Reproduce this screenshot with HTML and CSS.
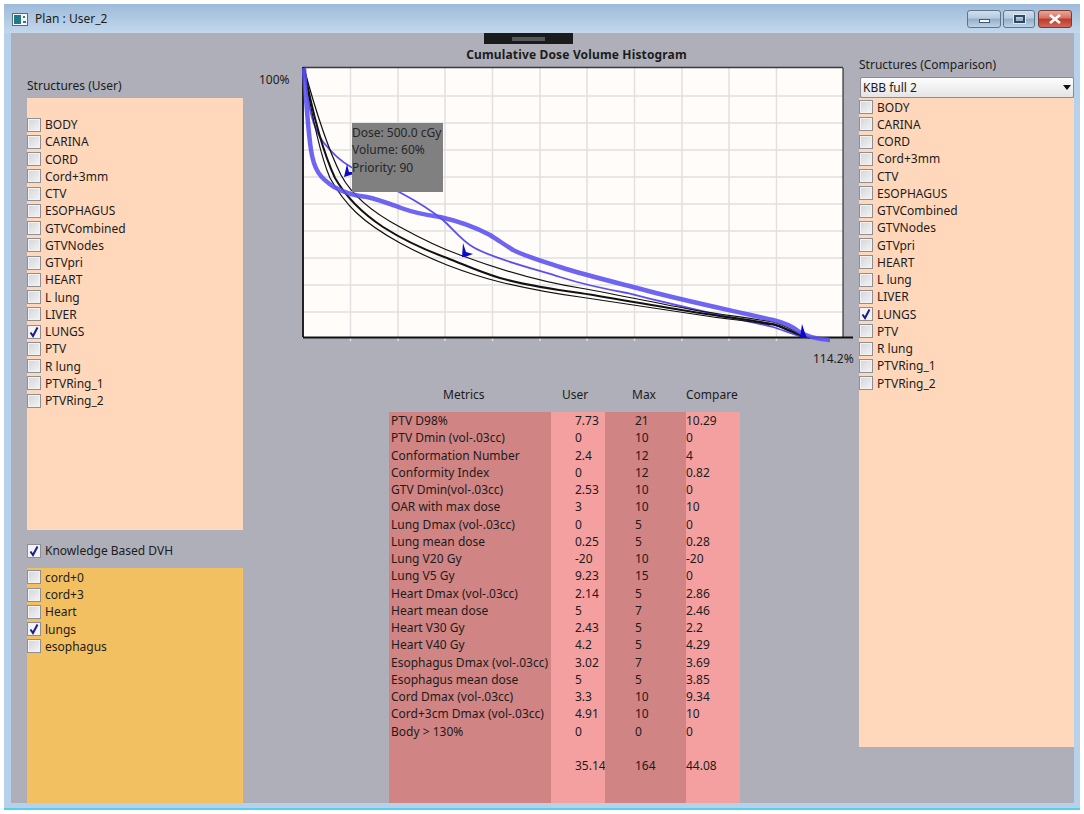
FILE: index.html
```html
<!DOCTYPE html>
<html lang="en">

<head>
    <meta charset="UTF-8">
    <title>Plan : User_2</title>
    <link rel="stylesheet" href="styles.css">
</head>

<body>
    <div class="window">
        <div class="titlebar">
            <svg class="app-icon" width="16" height="13" viewBox="0 0 16 13">
                <rect x="0.5" y="0.5" width="15" height="12" fill="#f4f6f8" stroke="#5a6a78" />
                <rect x="2" y="2" width="7" height="9" fill="#1f7a8c" />
                <rect x="11" y="3" width="2" height="2" fill="#3a8a4a" />
                <rect x="11" y="8" width="3" height="2" fill="#3a6ab0" />
            </svg>
            <span class="window-title">Plan : User_2</span>
            <div class="window-buttons">
                <div class="win-btn"><span class="min-glyph"></span></div>
                <div class="win-btn max-btn"><span class="max-glyph"></span></div>
                <div class="win-btn close-btn">
                    <svg width="14" height="10" viewBox="0 0 14 10">
                        <path d="M2 1 L12 9 M12 1 L2 9" stroke="#fff" stroke-width="2.6" />
                    </svg>
                </div>
            </div>
        </div>
        <div class="client">
            <!-- left column -->
            <div class="left-col">
                <div class="col-label">Structures (User)</div>
                <div class="panel peach user-panel">
                    <div class="check-row"><span class="box"></span>BODY</div>
                    <div class="check-row"><span class="box"></span>CARINA</div>
                    <div class="check-row"><span class="box"></span>CORD</div>
                    <div class="check-row"><span class="box"></span>Cord+3mm</div>
                    <div class="check-row"><span class="box"></span>CTV</div>
                    <div class="check-row"><span class="box"></span>ESOPHAGUS</div>
                    <div class="check-row"><span class="box"></span>GTVCombined</div>
                    <div class="check-row"><span class="box"></span>GTVNodes</div>
                    <div class="check-row"><span class="box"></span>GTVpri</div>
                    <div class="check-row"><span class="box"></span>HEART</div>
                    <div class="check-row"><span class="box"></span>L lung</div>
                    <div class="check-row"><span class="box"></span>LIVER</div>
                    <div class="check-row"><span class="box checked">
                        <svg width="12" height="12" viewBox="0 0 12 12"><path d="M2.5 6.5 L5 10 L9.5 1.5" fill="none" stroke="#1c1c8c" stroke-width="2" /></svg>
                    </span>LUNGS</div>
                    <div class="check-row"><span class="box"></span>PTV</div>
                    <div class="check-row"><span class="box"></span>R lung</div>
                    <div class="check-row"><span class="box"></span>PTVRing_1</div>
                    <div class="check-row"><span class="box"></span>PTVRing_2</div>
                </div>
                <div class="check-row kb-row"><span class="box checked">
                    <svg width="12" height="12" viewBox="0 0 12 12"><path d="M2.5 6.5 L5 10 L9.5 1.5" fill="none" stroke="#1c1c8c" stroke-width="2" /></svg>
                </span>Knowledge Based DVH</div>
                <div class="panel yellow kb-panel">
                    <div class="check-row"><span class="box"></span>cord+0</div>
                    <div class="check-row"><span class="box"></span>cord+3</div>
                    <div class="check-row"><span class="box"></span>Heart</div>
                    <div class="check-row"><span class="box checked">
                        <svg width="12" height="12" viewBox="0 0 12 12"><path d="M2.5 6.5 L5 10 L9.5 1.5" fill="none" stroke="#1c1c8c" stroke-width="2" /></svg>
                    </span>lungs</div>
                    <div class="check-row"><span class="box"></span>esophagus</div>
                </div>
            </div>

            <!-- chart and metrics -->
            <div class="center-col">
                <div class="handle"><span class="handle-grip"></span></div>
                <div class="chart-title">Cumulative Dose Volume Histogram</div>
                <div class="chart-wrap">
                    <svg class="chart" width="616" height="316" viewBox="243 60 616 316">
                        <rect x="303" y="68" width="540" height="269" fill="#fffcfa" />
                        <g stroke="#e2e0e0" stroke-width="1.5">
                            <path d="M350.5 68V341 M398 68V341 M445 68V341 M492.5 68V341 M540 68V341 M587 68V341 M634.5 68V341 M682 68V341 M729 68V341 M776.5 68V341" />
                            <path d="M303 96H843 M303 123H843 M303 150H843 M303 177H843 M303 204H843 M303 231H843 M303 258H843 M303 285H843 M303 312H843" />
                        </g>
                        <path d="M303 67.5H843" stroke="#3a3a3a" stroke-width="1.5" />
                        <path d="M303 67V337" stroke="#222" stroke-width="2" />
                        <path d="M843 68V337" stroke="#111" stroke-width="1" />

                        <!-- thin blue -->
                        <path d="M304 68 C308 105 312 128 324 143 C332 153 342 162 351 167 C370 177 388 186 401 193 C418 202 432 211 443 220 C453 229 462 241 473 247 C495 260 540 270 560 277 C585 285 605 289 627 293 C655 300 685 307 710 313 C735 319 755 322 773 327 C785 331 795 335 803 337" fill="none" stroke="#4a3cf0" stroke-width="1.8" opacity="0.9" />
                        <!-- black curves -->
                        <g fill="none" stroke="#111">
                            <path d="M304 68 C310 105 318 150 330 178 C345 205 362 222 400 243 C420 254 432 259 447 265 C465 272 480 277 500 282 C525 288 550 293 580 297 C625 304 665 310 700 315 C725 319 750 321 773 325 C785 328 795 335 810 338" stroke-width="1.2" />
                            <path d="M304 68 C311 105 322 150 335 178 C346 197 362 213 383 227 C405 241 425 250 447 258 C465 265 480 272 500 278 C525 285 550 289 580 293 C625 300 665 308 700 313 C725 317 750 320 773 324 C785 327 795 334 810 338" stroke-width="2" />
                            <path d="M304 68 C314 105 326 145 341 175 C350 192 368 210 400 227 C420 238 440 248 460 255 C495 268 535 281 580 288 C625 296 665 305 700 311 C725 315 750 318 773 322 C785 325 795 332 810 338" stroke-width="1.2" />
                        </g>
                        <path d="M303 337.500H853" stroke="#111" stroke-width="1.8" />
                        <!-- thick blue -->
                        <path d="M304 68 C306 100 308 130 311 150 C314 170 320 178 334 187 C345 193 355 196 367 197 C380 200 390 204 401 208 C415 213 425 215 440 217 C458 221 475 227 490 235 C498 240 505 245 513 250 C530 258 545 262 560 267 C585 275 610 281 637 288 C680 300 730 310 773 320 C785 323 793 327 798 331 C805 336 815 339 830 340" fill="none" stroke="#5a50f0" stroke-width="4.5" opacity="0.88" />
                        <!-- markers -->
                        <g fill="#0a0ac8">
                            <path d="M344 177 L347 164 L349 172 L353 172 L352 174.500 Z" />
                            <path d="M462 257 L463 243 L466 252 L473 254 L465 257 Z" />
                            <path d="M800 338 L802 324 L805 333 L807 338 Z" />
                        </g>
                        <text class="axis-label" x="259" y="84">100%</text>
                        <text class="axis-label" x="813" y="363">114.2%</text>
                    </svg>
                    <div class="tooltip">
                        <div>Dose: 500.0 cGy</div>
                        <div>Volume: 60%</div>
                        <div>Priority: 90</div>
                    </div>
                </div>

                <div class="metrics-head">
                    <div class="h-metric">Metrics</div>
                    <div class="h-user">User</div>
                    <div class="h-max">Max</div>
                    <div class="h-compare">Compare</div>
                </div>
                <div class="metrics">
                    <div class="m-col m-name dark">
                        <div class="cell">PTV D98%</div>
                        <div class="cell">PTV Dmin (vol-.03cc)</div>
                        <div class="cell">Conformation Number</div>
                        <div class="cell">Conformity Index</div>
                        <div class="cell">GTV Dmin(vol-.03cc)</div>
                        <div class="cell">OAR with max dose</div>
                        <div class="cell">Lung Dmax (vol-.03cc)</div>
                        <div class="cell">Lung mean dose</div>
                        <div class="cell">Lung V20 Gy</div>
                        <div class="cell">Lung V5 Gy</div>
                        <div class="cell">Heart Dmax (vol-.03cc)</div>
                        <div class="cell">Heart mean dose</div>
                        <div class="cell">Heart V30 Gy</div>
                        <div class="cell">Heart V40 Gy</div>
                        <div class="cell">Esophagus Dmax (vol-.03cc)</div>
                        <div class="cell">Esophagus mean dose</div>
                        <div class="cell">Cord Dmax (vol-.03cc)</div>
                        <div class="cell">Cord+3cm Dmax (vol-.03cc)</div>
                        <div class="cell">Body &gt; 130%</div>
                    </div>
                    <div class="m-col m-user light">
                        <div class="cell">7.73</div>
                        <div class="cell">0</div>
                        <div class="cell">2.4</div>
                        <div class="cell">0</div>
                        <div class="cell">2.53</div>
                        <div class="cell">3</div>
                        <div class="cell">0</div>
                        <div class="cell">0.25</div>
                        <div class="cell">-20</div>
                        <div class="cell">9.23</div>
                        <div class="cell">2.14</div>
                        <div class="cell">5</div>
                        <div class="cell">2.43</div>
                        <div class="cell">4.2</div>
                        <div class="cell">3.02</div>
                        <div class="cell">5</div>
                        <div class="cell">3.3</div>
                        <div class="cell">4.91</div>
                        <div class="cell">0</div>
                        <div class="cell">&nbsp;</div>
                        <div class="cell">35.14</div>
                    </div>
                    <div class="m-col m-max dark">
                        <div class="cell">21</div>
                        <div class="cell">10</div>
                        <div class="cell">12</div>
                        <div class="cell">12</div>
                        <div class="cell">10</div>
                        <div class="cell">10</div>
                        <div class="cell">5</div>
                        <div class="cell">5</div>
                        <div class="cell">10</div>
                        <div class="cell">15</div>
                        <div class="cell">5</div>
                        <div class="cell">7</div>
                        <div class="cell">5</div>
                        <div class="cell">5</div>
                        <div class="cell">7</div>
                        <div class="cell">5</div>
                        <div class="cell">10</div>
                        <div class="cell">10</div>
                        <div class="cell">0</div>
                        <div class="cell">&nbsp;</div>
                        <div class="cell">164</div>
                    </div>
                    <div class="m-col m-compare light">
                        <div class="cell">10.29</div>
                        <div class="cell">0</div>
                        <div class="cell">4</div>
                        <div class="cell">0.82</div>
                        <div class="cell">0</div>
                        <div class="cell">10</div>
                        <div class="cell">0</div>
                        <div class="cell">0.28</div>
                        <div class="cell">-20</div>
                        <div class="cell">0</div>
                        <div class="cell">2.86</div>
                        <div class="cell">2.46</div>
                        <div class="cell">2.2</div>
                        <div class="cell">4.29</div>
                        <div class="cell">3.69</div>
                        <div class="cell">3.85</div>
                        <div class="cell">9.34</div>
                        <div class="cell">10</div>
                        <div class="cell">0</div>
                        <div class="cell">&nbsp;</div>
                        <div class="cell">44.08</div>
                    </div>
                </div>
            </div>

            <!-- right column -->
            <div class="right-col">
                <div class="col-label">Structures (Comparison)</div>
                <div class="combo">KBB full 2<span class="combo-arrow"></span></div>
                <div class="panel peach compare-panel">
                    <div class="check-row"><span class="box"></span>BODY</div>
                    <div class="check-row"><span class="box"></span>CARINA</div>
                    <div class="check-row"><span class="box"></span>CORD</div>
                    <div class="check-row"><span class="box"></span>Cord+3mm</div>
                    <div class="check-row"><span class="box"></span>CTV</div>
                    <div class="check-row"><span class="box"></span>ESOPHAGUS</div>
                    <div class="check-row"><span class="box"></span>GTVCombined</div>
                    <div class="check-row"><span class="box"></span>GTVNodes</div>
                    <div class="check-row"><span class="box"></span>GTVpri</div>
                    <div class="check-row"><span class="box"></span>HEART</div>
                    <div class="check-row"><span class="box"></span>L lung</div>
                    <div class="check-row"><span class="box"></span>LIVER</div>
                    <div class="check-row"><span class="box checked">
                        <svg width="12" height="12" viewBox="0 0 12 12"><path d="M2.5 6.5 L5 10 L9.5 1.5" fill="none" stroke="#1c1c8c" stroke-width="2" /></svg>
                    </span>LUNGS</div>
                    <div class="check-row"><span class="box"></span>PTV</div>
                    <div class="check-row"><span class="box"></span>R lung</div>
                    <div class="check-row"><span class="box"></span>PTVRing_1</div>
                    <div class="check-row"><span class="box"></span>PTVRing_2</div>
                </div>
            </div>
        </div>
        <div class="bottom-frame"></div>
    </div>
</body>

</html>
```

FILE: styles.css
```css
* {
    margin: 0;
    padding: 0;
    box-sizing: border-box;
}

body {
    background: #fff;
    font-family: "Noto Sans", "Liberation Sans", sans-serif;
    font-size: 12px;
    color: #1c1c1c;
}

.window {
    width: 1076px;
    margin: 4px 0 0 4px;
    padding: 0 6px 0 7px;
    background: #b8d1ea;
}

.titlebar {
    height: 29px;
    margin: 0 -6px 0 -7px;
    padding-left: 8px;
    display: flex;
    align-items: center;
    background: linear-gradient(#9dbbda, #c3d8ec);
}

.app-icon {
    margin-top: 1px;
}

.window-title {
    margin-left: 7px;
    font-size: 12px;
}

.window-buttons {
    margin-left: auto;
    margin-right: 8px;
    display: flex;
    gap: 2px;
}

.win-btn {
    width: 34px;
    height: 18px;
    border: 1px solid #5f7489;
    border-radius: 3px;
    display: flex;
    align-items: center;
    justify-content: center;
    background: linear-gradient(#cfdeec 0%, #b6cbe0 45%, #93adc8 50%, #bcd2e6 100%);
}

.max-btn {
    width: 32px;
}

.close-btn {
    margin-left: 1px;
    border-color: #7a3a30;
    background: linear-gradient(#e8a79c 0%, #d6705f 45%, #b93a28 50%, #d0685a 100%);
}

.min-glyph {
    width: 11px;
    height: 4px;
    margin-top: 5px;
    background: #f4f8fb;
    border: 1px solid #44586c;
}

.max-glyph {
    width: 11px;
    height: 8px;
    border: 2px solid #33485c;
    outline: 1px solid #dfe9f2;
}

.client {
    height: 770px;
    display: flex;
    background: #aeafb8;
}

.left-col {
    width: 232px;
    padding: 44px 0 0 16px;
}

.col-label {
    height: 21px;
    line-height: 17px;
}

.panel {
    padding-top: 18px;
}

.peach {
    background: #ffd8bc;
}

.yellow {
    background: #f2c060;
}

.user-panel {
    width: 216px;
    height: 432px;
}

.kb-row {
    margin-top: 12px;
}

.kb-panel {
    width: 216px;
    height: 235px;
    margin-top: 9px;
    padding-top: 0.5px;
}

.check-row {
    height: 17.25px;
    display: flex;
    align-items: center;
    white-space: nowrap;
}

.box {
    width: 14px;
    height: 14px;
    margin-right: 4px;
    flex: none;
    display: flex;
    align-items: center;
    justify-content: center;
    border: 1px solid #8e8f92;
    background: linear-gradient(135deg, #d4d5d8, #f4f4f6);
    box-shadow: inset 0 0 0 1px #f2f2f2;
}

.checked {
    background: #f4f4f6;
}

.center-col {
    width: 616px;
}

.handle {
    width: 89px;
    height: 11px;
    margin-left: 241px;
    display: flex;
    align-items: center;
    justify-content: center;
    background: #1b1b1b;
}

.handle-grip {
    width: 33px;
    height: 4px;
    background: #55575a;
}

.chart-title {
    height: 16px;
    margin-left: 51px;
    line-height: 22px;
    text-align: center;
    font-weight: bold;
    font-size: 12px;
    letter-spacing: 0.15px;
}

.chart-wrap {
    position: relative;
    height: 316px;
}

.chart {
    display: block;
}

.axis-label {
    font-size: 12px;
    fill: #1c1c1c;
}

.tooltip {
    position: absolute;
    left: 109px;
    top: 63px;
    width: 91px;
    height: 69px;
    padding-top: 1px;
    background: #808080;
    color: #262626;
    line-height: 17.25px;
    white-space: nowrap;
}

.metrics-head {
    height: 36px;
    padding-top: 10px;
    margin-left: 146px;
    display: flex;
}

.h-metric {
    width: 173px;
    padding-left: 54px;
}

.h-user {
    width: 70px;
}

.h-max {
    width: 54px;
}

.metrics {
    height: 391px;
    margin-left: 146px;
    display: flex;
}

.dark {
    background: #d08484;
}

.light {
    background: #f5a0a0;
}

.cell {
    height: 17.25px;
    line-height: 17.25px;
    white-space: nowrap;
}

.m-name {
    width: 162px;
    padding-left: 2px;
}

.m-user {
    width: 54px;
    padding-left: 24px;
}

.m-max {
    width: 81px;
    padding-left: 30px;
}

.m-compare {
    width: 54px;
}

.right-col {
    width: 215px;
    padding-top: 23px;
}

.combo {
    position: relative;
    height: 21px;
    margin-left: 1px;
    padding-left: 2px;
    line-height: 20px;
    border: 1px solid #8a8c90;
    border-radius: 2px;
    background: linear-gradient(#fdfdfd, #e4e4e6);
}

.combo-arrow {
    position: absolute;
    right: 2px;
    top: 7px;
    border-left: 4px solid transparent;
    border-right: 4px solid transparent;
    border-top: 5px solid #111;
}

.compare-panel {
    height: 649px;
    padding-top: 0.5px;
}

.bottom-frame {
    height: 7px;
    margin: 0 -6px 0 -7px;
    border-bottom: 2px solid #58d0e8;
    background: #b8d1ea;
}
```
